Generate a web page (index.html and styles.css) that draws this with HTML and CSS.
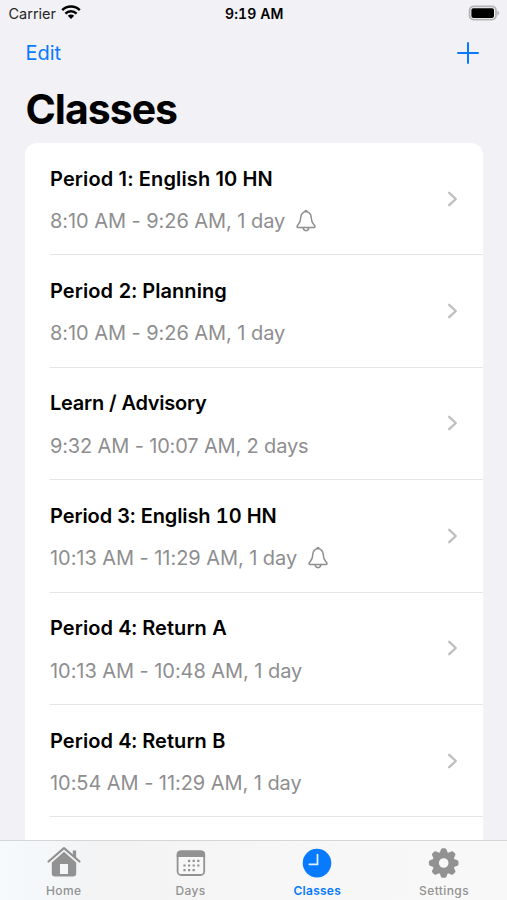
FILE: index.html
```html
<!DOCTYPE html>
<html lang="en">
<head>
<meta charset="utf-8">
<title>Classes</title>
<link rel="stylesheet" href="styles.css">
</head>
<body>
<svg width="0" height="0" class="defs">
  <symbol id="chevron" viewBox="0 0 12 18"><path d="M2.2 2.8 8.8 9l-6.6 6.2" fill="none" stroke="#bebec1" stroke-width="2.3" stroke-linecap="round" stroke-linejoin="round"/></symbol>
  <symbol id="bell" viewBox="0 0 20 24"><path d="M10 2.4C6.6 2.9 4.9 5.4 4.8 8.6 4.7 13.2 3.3 14.3 1.6 16.3.7 17.4.9 18.4 2.1 18.4H17.9C19.1 18.4 19.3 17.4 18.4 16.3 16.7 14.3 15.3 13.2 15.2 8.6 15.1 5.4 13.4 2.9 10 2.4ZM7.2 18.6C7.3 22.7 12.7 22.7 12.8 18.6M8.6 2.8Q10 .2 11.4 2.8" fill="none" stroke="#8e8e90" stroke-width="1.5" stroke-linejoin="round"/></symbol>
</svg>
<div class="screen">
  <header class="status">
    <div class="carrier"><span>Carrier</span>
      <svg width="20" height="15" viewBox="0 0 20 15"><g fill="none" stroke="#000" stroke-width="2.5"><path d="M1.2 5.2C6 .4 14 .4 18.8 5.2"/><path d="M4.4 8.6C7.5 5.6 12.5 5.6 15.6 8.6"/></g><path d="M6.8 10.8C8.5 9.2 11.5 9.2 13.2 10.8L10 14Z"/></svg>
    </div>
    <div class="clock">9:19 AM</div>
    <svg class="battery" width="32" height="16" viewBox="0 0 32 16"><rect x="1.6" y="1.4" width="26.4" height="13.2" rx="4" fill="#f2f1f6" stroke="#b4b4b5" stroke-width="1.8"/><rect x="3.4" y="3.3" width="22.6" height="9.6" rx="1.8"/><path d="M29.4 5.6Q31.2 6.3 31.2 8T29.4 10.4Z" fill="#b4b4b5"/></svg>
  </header>
  <nav class="nav">
    <a class="edit">Edit</a>
    <svg width="22" height="22" viewBox="0 0 22 22"><path d="M11 1v20M1 11h20" stroke="#087aff" stroke-width="2" stroke-linecap="round"/></svg>
  </nav>
  <h1>Classes</h1>
  <main class="list">
    <div class="row"><div class="info"><h2 class="proportional">Period 1: English 10 HN</h2><p><span>8:10 AM - 9:26 AM, 1 day</span><svg class="bell"><use href="#bell"/></svg></p></div><svg class="chevron"><use href="#chevron"/></svg></div>
    <div class="row"><div class="info"><h2 class="loose">Period 2: Planning</h2><p><span>8:10 AM - 9:26 AM, 1 day</span></p></div><svg class="chevron"><use href="#chevron"/></svg></div>
    <div class="row"><div class="info"><h2 class="tight">Learn / Advisory</h2><p class="tight"><span>9:32 AM - 10:07 AM, 2 days</span></p></div><svg class="chevron"><use href="#chevron"/></svg></div>
    <div class="row"><div class="info"><h2>Period 3: English 10 HN</h2><p><span>10:13 AM - 11:29 AM, 1 day</span><svg class="bell"><use href="#bell"/></svg></p></div><svg class="chevron"><use href="#chevron"/></svg></div>
    <div class="row"><div class="info"><h2 class="loose">Period 4: Return A</h2><p><span>10:13 AM - 10:48 AM, 1 day</span></p></div><svg class="chevron"><use href="#chevron"/></svg></div>
    <div class="row"><div class="info"><h2 class="loose">Period 4: Return B</h2><p><span>10:54 AM - 11:29 AM, 1 day</span></p></div><svg class="chevron"><use href="#chevron"/></svg></div>
  </main>
  <footer class="tabs">
    <div class="tab">
      <svg width="34" height="32" viewBox="0 0 34 32"><path d="M1.5 15.5 17 2.2 32.5 15.5" fill="none" stroke="#929292" stroke-width="2.2" stroke-linecap="round" stroke-linejoin="round"/><path d="M25.8 4.4h3.3v8l-3.3-2.8Z" fill="#929292"/><path fill-rule="evenodd" d="M17 5.8 29.2 16.4V27.3Q29.2 30.6 26 30.6H8Q4.8 30.6 4.8 27.3V16.4ZM13 18v10h8V18Z" fill="#929292"/></svg>
      <span>Home</span>
    </div>
    <div class="tab">
      <svg width="34" height="32" viewBox="0 0 34 32"><rect x="3.6" y="5.3" width="26.6" height="23.7" rx="3.6" fill="#f7f7f7" stroke="#929292" stroke-width="1.8"/><path d="M2.7 11V8.3Q2.7 4.4 6.7 4.4H27.1Q31.1 4.4 31.1 8.3V11Z" fill="#929292"/><path fill="#929292" d="M14 13.8h2.2v2.2H14zM18.6 13.8h2.2v2.2h-2.2zM23.2 13.8h2.2v2.2h-2.2zM9.4 18.4h2.2v2.2H9.4zM14 18.4h2.2v2.2H14zM18.6 18.4h2.2v2.2h-2.2zM23.2 18.4h2.2v2.2h-2.2zM9.4 23h2.2v2.2H9.4zM14 23h2.2v2.2H14zM18.6 23h2.2v2.2h-2.2z"/></svg>
      <span>Days</span>
    </div>
    <div class="tab active">
      <svg width="34" height="32" viewBox="0 0 34 32"><circle cx="17" cy="17.1" r="14.3" fill="#087aff"/><path d="M17.5 8.6v9.7H9.4" fill="none" stroke="#d9f2ff" stroke-width="1.8" stroke-linecap="round"/></svg>
      <span>Classes</span>
    </div>
    <div class="tab">
      <svg width="34" height="32" viewBox="0 0 34 32"><g transform="translate(16.7 17)"><circle r="8" fill="none" stroke="#929292" stroke-width="6.4"/><g fill="#929292"><path id="tooth" d="M-4.2-9.5-2.9-13.2Q-2.5-14.8-1.2-14.8H1.2Q2.5-14.8 2.9-13.2L4.2-9.5Z"/><use href="#tooth" transform="rotate(45)"/><use href="#tooth" transform="rotate(90)"/><use href="#tooth" transform="rotate(135)"/><use href="#tooth" transform="rotate(180)"/><use href="#tooth" transform="rotate(225)"/><use href="#tooth" transform="rotate(270)"/><use href="#tooth" transform="rotate(315)"/></g></g></svg>
      <span>Settings</span>
    </div>
  </footer>
</div>
</body>
</html>
```
FILE: styles.css
```css
* { box-sizing: border-box; }
body { margin: 0; background: #f2f1f6; font-family: Inter, "Liberation Sans", sans-serif; color: #000; }
svg { display: block; flex: none; }
h1, h2, p { margin: 0; }
.defs { position: absolute; }
.screen { height: 900px; display: flex; flex-direction: column; overflow: hidden; }
.status { height: 28px; flex: none; display: grid; grid-template-columns: 1fr auto 1fr; align-items: center; padding: 0 7px 0 8.5px; }
.carrier { display: flex; align-items: center; gap: 5px; font-size: 14.5px; line-height: 28px; color: #262628; }
.carrier svg { margin-top: -3px; }
.clock { font-size: 14px; font-weight: 600; line-height: 28px; letter-spacing: .1px; font-variant-numeric: tabular-nums; }
.battery { justify-self: end; margin-top: -2px; }
.nav { height: 50px; flex: none; display: flex; justify-content: space-between; align-items: center; padding: 0 28px 0 25.5px; color: #087aff; }
.edit { font-size: 20px; line-height: 50px; }
h1 { flex: none; height: 65px; padding-left: 25.5px; font-size: 41px; line-height: 62px; font-weight: 700; letter-spacing: -1px; }
.list { flex: 1; min-height: 0; overflow: hidden; margin: 0 24.5px 0 25px; background: #fff; border-radius: 12px 12px 0 0; }
.row { height: 112.4px; margin-left: 25px; display: flex; justify-content: space-between; align-items: center; padding-right: 23.5px; border-bottom: 1.4px solid #e5e5e7; }
.info { height: 100%; padding-top: 20.6px; }
h2 { font-size: 20px; line-height: 30px; font-weight: 600; letter-spacing: -.1px; white-space: nowrap; font-variant-numeric: tabular-nums; }
h2.proportional { letter-spacing: .13px; font-variant-numeric: normal; }
h2.loose { letter-spacing: .06px; }
h2.tight { letter-spacing: -.26px; }
p { display: flex; align-items: center; gap: 11px; margin-top: 12.4px; font-size: 20px; line-height: 30px; color: #8e8e90; white-space: nowrap; letter-spacing: -.06px; }
p.tight { letter-spacing: -.15px; }
.bell { width: 20px; height: 24px; }
.chevron { width: 12px; height: 18px; }
.tabs { height: 60px; flex: none; display: grid; grid-template-columns: repeat(4, 1fr); background: linear-gradient(90deg, #f6fafd, #f3f3f4 20%, #f7f7f7 55%, #f8f8f8); border-top: 1px solid #d6d6d9; }
.tab { display: flex; flex-direction: column; align-items: center; padding-top: 5px; color: #929292; font-size: 12px; line-height: 18px; font-weight: 500; letter-spacing: .4px; }
.tab svg { margin-left: .8px; }
.tab span { margin: 4.2px 0 0 .8px; }
.active { color: #087aff; font-weight: 600; letter-spacing: .25px; }
```
